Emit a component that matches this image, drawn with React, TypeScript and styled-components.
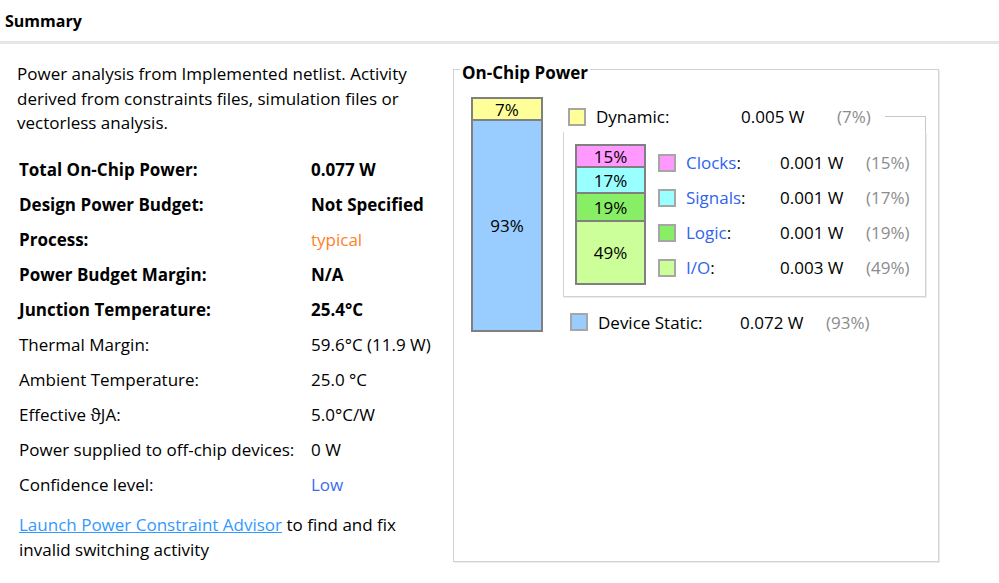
import styled, { createGlobalStyle } from "styled-components";

const GlobalStyle = createGlobalStyle`
  html, body {
    margin: 0;
    padding: 0;
    background: #ffffff;
  }
  body {
    font-family: "Open Sans", "Noto Sans", sans-serif;
    font-size: 17px;
    color: #000000;
  }
`;

const Page = styled.div`
  width: 999px;
  height: 583px;
  overflow: hidden;
  display: flex;
  flex-direction: column;
`;

const Header = styled.div`
  height: 41px;
  display: flex;
  align-items: center;
  padding-left: 5px;
  font-size: 16px;
  font-weight: 700;
  border-bottom: 3px solid #e6e6e6;
`;

const Body = styled.div`
  display: flex;
`;

const LeftCol = styled.div`
  width: 436px;
  padding: 18px 0 0 17px;
  box-sizing: border-box;
`;

const Intro = styled.p`
  margin: 0;
  line-height: 24.5px;
  width: 412px;
`;

const Props = styled.div`
  display: grid;
  grid-template-columns: 292px auto;
  margin-top: 16px;
  padding-left: 2px;
`;

const Cell = styled.div<{ $bold?: boolean; $color?: string }>`
  height: 35px;
  display: flex;
  align-items: center;
  font-weight: ${(p) => (p.$bold ? 700 : 400)};
  color: ${(p) => p.$color || "#000000"};
  white-space: nowrap;
`;

const Note = styled.p`
  margin: 10px 0 0 2px;
  line-height: 25px;
  width: 412px;
`;

const Link = styled.a`
  color: #3399ff;
  text-decoration: underline;
  cursor: pointer;
`;

const Panel = styled.fieldset`
  margin: 12px 0 0 17px;
  width: 486px;
  height: 506px;
  box-sizing: border-box;
  border: 1px solid #d2d2d2;
  box-shadow: 1px 1px 0 #ececec;
  padding: 15px 0 0 0;
  display: block;
`;

const PanelTitle = styled.legend`
  font-weight: 700;
  line-height: 18px;
  padding: 8px 2px 0 2px;
  margin-left: 6px;
`;

const Row = styled.div`
  display: flex;
  align-items: flex-start;
  margin-left: 17px;
`;

const Bar = styled.div<{ $w: number; $h: number }>`
  width: ${(p) => p.$w}px;
  height: ${(p) => p.$h}px;
  box-sizing: border-box;
  border: 2px solid #808080;
  display: flex;
  flex-direction: column;
`;

const Segment = styled.div<{ $bg: string; $h?: number; $sep: number }>`
  background: ${(p) => p.$bg};
  ${(p) => (p.$h ? `height: ${p.$h}px;` : "flex: 1;")}
  display: flex;
  align-items: center;
  justify-content: center;
  line-height: 1;
  & + & {
    border-top: ${(p) => p.$sep}px solid #808080;
  }
`;

const DynCol = styled.div`
  width: 363px;
  margin-left: 20px;
`;

const DynHead = styled.div`
  height: 35px;
  box-sizing: border-box;
  padding-top: 4px;
  display: flex;
  align-items: center;
`;

const Swatch = styled.span<{ $bg: string; $ml: number }>`
  width: 18px;
  height: 18px;
  box-sizing: border-box;
  border: 2px solid #a6a6a6;
  background: ${(p) => p.$bg};
  margin-left: ${(p) => p.$ml}px;
  margin-right: 10px;
  flex: none;
`;

const Label = styled.span<{ $w: number }>`
  width: ${(p) => p.$w}px;
  flex: none;
  white-space: nowrap;
`;

const Blue = styled.span`
  color: #2f63f0;
`;

const Pct = styled.span<{ $w?: number }>`
  color: #8c8c8c;
  flex: none;
  ${(p) => (p.$w ? `width: ${p.$w}px;` : "")}
`;

const Corner = styled.div`
  flex: 1;
  align-self: stretch;
  margin-top: 15px;
  border-top: 1px solid #c8c8c8;
  border-right: 1px solid #c8c8c8;
`;

const DynBox = styled.div`
  border: 1px solid #d2d2d2;
  border-top: none;
  box-shadow: 1px 1px 0 #ececec;
  padding: 12px 0 11px 11px;
  display: flex;
  align-items: flex-start;
`;

const Legend = styled.div`
  margin-top: 1px;
`;

const LegendRow = styled.div`
  height: 35px;
  display: flex;
  align-items: center;
`;

const StaticRow = styled.div`
  height: 28px;
  margin-top: 11px;
  display: flex;
  align-items: center;
`;

const parts = [
  { name: "Clocks", value: "0.001 W", pct: "15%", color: "#ff99ff", h: 20 },
  { name: "Signals", value: "0.001 W", pct: "17%", color: "#99ffff", h: 24 },
  { name: "Logic", value: "0.001 W", pct: "19%", color: "#88ee66", h: 26 },
  { name: "I/O", value: "0.003 W", pct: "49%", color: "#ccff99", h: 0 },
];

const rows: { label: string; value: string; bold?: boolean; color?: string }[] = [
  { label: "Total On-Chip Power:", value: "0.077 W", bold: true },
  { label: "Design Power Budget:", value: "Not Specified", bold: true },
  { label: "Process:", value: "typical", bold: true, color: "#ff7f27" },
  { label: "Power Budget Margin:", value: "N/A", bold: true },
  { label: "Junction Temperature:", value: "25.4°C", bold: true },
  { label: "Thermal Margin:", value: "59.6°C (11.9 W)" },
  { label: "Ambient Temperature:", value: "25.0 °C" },
  { label: "Effective \u03d1JA:", value: "5.0°C/W" },
  { label: "Power supplied to off-chip devices:", value: "0 W" },
  { label: "Confidence level:", value: "Low", color: "#3b6cf5" },
];

export default function App() {
  return (
    <Page>
      <GlobalStyle />
      <Header>Summary</Header>
      <Body>
        <LeftCol>
          <Intro>
            Power analysis from Implemented netlist. Activity derived from
            constraints files, simulation files or vectorless analysis.
          </Intro>
          <Props>
            {rows.map((r) => (
              <>
                <Cell key={r.label} $bold={r.bold}>
                  {r.label}
                </Cell>
                <Cell key={r.label + "v"} $bold={r.bold && !r.color} $color={r.color}>
                  {r.value}
                </Cell>
              </>
            ))}
          </Props>
          <Note>
            <Link>Launch Power Constraint Advisor</Link> to find and fix
            invalid switching activity
          </Note>
        </LeftCol>
        <Panel>
          <PanelTitle>On-Chip Power</PanelTitle>
          <Row>
            <Bar $w={72} $h={235}>
              <Segment $bg="#ffff99" $h={20} $sep={1}>
                7%
              </Segment>
              <Segment $bg="#99ccff" $sep={1}>
                93%
              </Segment>
            </Bar>
            <DynCol>
              <DynHead>
                <Swatch $bg="#ffff99" $ml={5} />
                <Label $w={145}>Dynamic:</Label>
                <Label $w={96}>0.005 W</Label>
                <Pct $w={48}>(7%)</Pct>
                <Corner />
              </DynHead>
              <DynBox>
                <Bar $w={71} $h={141}>
                  {parts.map((p) => (
                    <Segment key={p.name} $bg={p.color} $h={p.h || undefined} $sep={2}>
                      {p.pct}
                    </Segment>
                  ))}
                </Bar>
                <Legend>
                  {parts.map((p) => (
                    <LegendRow key={p.name}>
                      <Swatch $bg={p.color} $ml={12} />
                      <Label $w={94}>
                        <Blue>{p.name}</Blue>:
                      </Label>
                      <Label $w={86}>{p.value}</Label>
                      <Pct>({p.pct})</Pct>
                    </LegendRow>
                  ))}
                </Legend>
              </DynBox>
              <StaticRow>
                <Swatch $bg="#99ccff" $ml={7} />
                <Label $w={142}>Device Static:</Label>
                <Label $w={86}>0.072 W</Label>
                <Pct>(93%)</Pct>
              </StaticRow>
            </DynCol>
          </Row>
        </Panel>
      </Body>
    </Page>
  );
}
